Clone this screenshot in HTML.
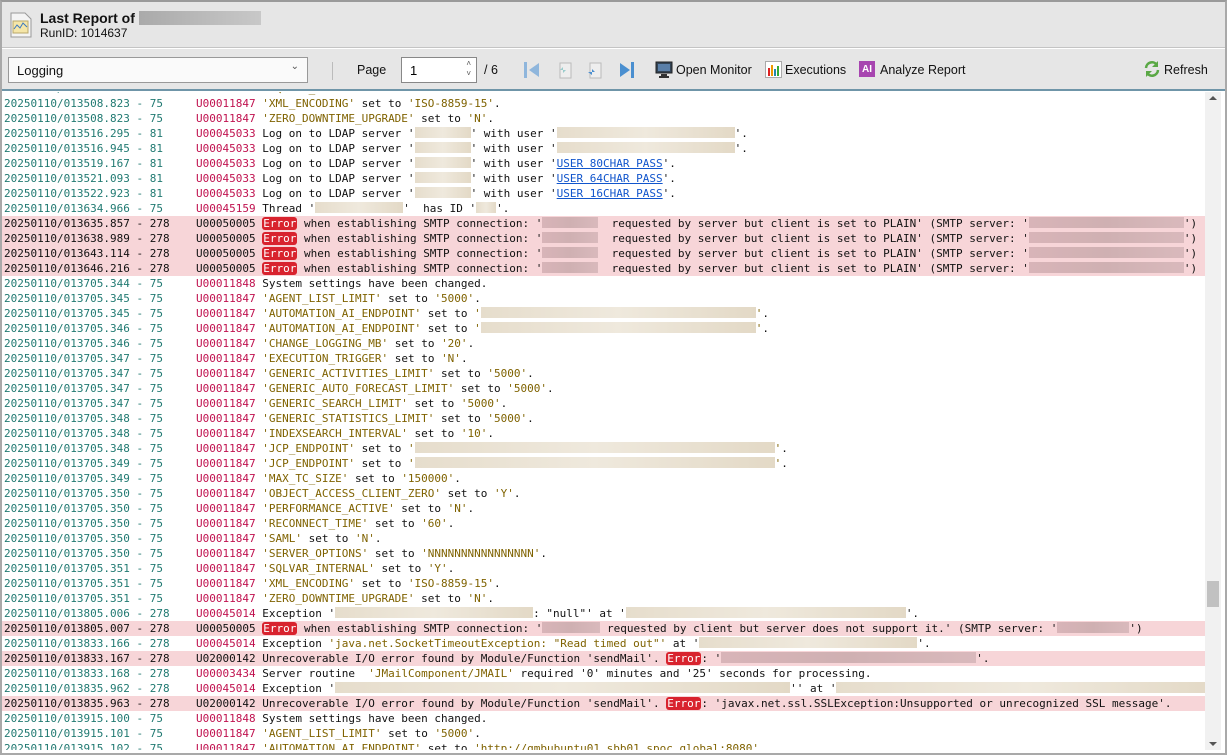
<!DOCTYPE html>
<html><head><meta charset="utf-8"><style>
*{margin:0;padding:0;box-sizing:border-box}
body{width:1227px;height:755px;overflow:hidden;background:#fff;font-family:"Liberation Sans",Arial,sans-serif;position:relative}
.frame{position:absolute;left:0;top:0;width:1227px;height:755px;border:2px solid #a9a9a9;border-top:2px solid #9a9a9a}
.hdr{position:absolute;left:2px;top:2px;width:1223px;height:46px;background:#e6e6e6;border-bottom:1px solid #c4c4c4}
.title{position:absolute;left:38px;top:8px;font-size:14px;font-weight:bold;color:#111}
.runid{position:absolute;left:38px;top:24px;font-size:12px;color:#111}
.tb{position:absolute;left:2px;top:49px;width:1223px;height:42px;background:#e6e6e6;border-bottom:2px solid #6f95a8}
.sel{position:absolute;left:6px;top:8px;width:300px;height:26px;background:#fafafa;border:1px solid #999;font-size:13px;padding:5px 8px;color:#111}
.lbl{position:absolute;font-size:12.5px;color:#111}
.inp{position:absolute;left:399px;top:8px;width:76px;height:26px;background:#fff;border:1px solid #888;font-size:13px;padding:5px 8px}
.log{position:absolute;left:2px;top:92px;width:1203px;height:658px;overflow:hidden}
.in{position:absolute;left:0;top:-11px;width:1203px}
.r{height:15px;line-height:15px;font-family:"DejaVu Sans Mono","Liberation Mono",monospace;font-size:11px;white-space:pre;padding-left:2px;color:#111}
.t{display:inline-block;width:192px;color:#217a72}
.c{color:#c0124f}
.s{color:#7f6200}
.e{background:#f7d5d8}
.e .t,.e .c{color:#111}
.b{display:inline-block;height:11px;vertical-align:-1px;background:linear-gradient(90deg,#e6ddcc,#efe9dd,#e3d9c6)}
.e .b{background:linear-gradient(90deg,#d8b4b8,#cfb0b2,#d9b9bc)}
.err{background:#d8232e;color:#fff;border-radius:3px;padding:0 1px}
a{color:#1155cc;text-decoration:underline}
.sb{position:absolute;left:1205px;top:92px;width:16px;height:658px;background:#f1f1f1}
.th{position:absolute;left:1207px;top:581px;width:12px;height:26px;background:#c1c1c1}
</style></head><body>
<div class="hdr">
<svg style="position:absolute;left:8px;top:10px" width="22" height="26" viewBox="0 0 22 26"><path d="M1 1h14l6 6v18H1z" fill="#f4f4f4" stroke="#999"/><rect x="3" y="9" width="15" height="12" fill="#f5e6a8" stroke="#b9a76a"/><path d="M4 17l3-4 3 3 3-5 4 4" stroke="#3a78c0" fill="none"/></svg>
<div class="title">Last Report of <span style="display:inline-block;width:122px;height:14px;vertical-align:-2px;background:linear-gradient(90deg,#aaa,#c8c8c8)"></span></div>
<div class="runid">RunID: 1014637</div>
</div>
<div class="tb">
<div class="sel">Logging<span style="position:absolute;right:8px;top:3px;font-size:10px;color:#555">&#8964;</span></div>
<div style="position:absolute;left:330px;top:13px;width:1px;height:18px;background:#bbb"></div>
<div class="lbl" style="left:355px;top:14px">Page</div>
<div class="inp">1<span style="position:absolute;right:5px;top:1px;font-size:8px;color:#555;line-height:10px">&#708;<br>&#709;</span></div>
<div class="lbl" style="left:482px;top:14px">/ 6</div>
<svg style="position:absolute;left:520px;top:11px" width="116" height="20"><rect x="2" y="2" width="3" height="16" fill="#8fb6dc"/><path d="M17 3v14l-10-7z" fill="#8fb6dc"/><rect x="38" y="3" width="11" height="15" fill="#eee" stroke="#bbb"/><path d="M44 10h-6l3-3v6z" fill="#9cc"/><rect x="68" y="3" width="11" height="15" fill="#eee" stroke="#bbb"/><path d="M66 12h7l-3-3v6z" fill="#4a8fd0"/><path d="M98 3v14l10-7z" fill="#4a8fd0"/><rect x="109" y="2" width="3" height="16" fill="#4a8fd0"/></svg>
<svg style="position:absolute;left:653px;top:12px" width="18" height="18"><rect x="1" y="1" width="16" height="11" fill="#345" stroke="#222"/><rect x="3" y="3" width="12" height="7" fill="#5a7fa8"/><rect x="6" y="13" width="6" height="2" fill="#333"/><rect x="4" y="15" width="10" height="2" fill="#333"/></svg>
<div class="lbl" style="left:674px;top:14px">Open Monitor</div>
<svg style="position:absolute;left:763px;top:12px" width="17" height="17"><rect x=".5" y=".5" width="16" height="16" fill="#fff" stroke="#aaa"/><rect x="3" y="7" width="2" height="8" fill="#d22"/><rect x="6" y="4" width="2" height="11" fill="#e90"/><rect x="9" y="8" width="2" height="7" fill="#28a"/><rect x="12" y="5" width="2" height="10" fill="#3a3"/></svg>
<div class="lbl" style="left:783px;top:14px">Executions</div>
<div style="position:absolute;left:857px;top:12px;width:16px;height:16px;background:#a745b0;color:#fff;font-size:10px;font-weight:bold;line-height:17px;text-align:center">AI</div>
<div class="lbl" style="left:878px;top:14px">Analyze Report</div>
<svg style="position:absolute;left:1141px;top:11px" width="18" height="18"><path d="M3 8a6 6 0 0 1 11-3" stroke="#5aa845" stroke-width="2.5" fill="none"/><path d="M15 1v6h-6z" fill="#5aa845"/><path d="M15 10a6 6 0 0 1-11 3" stroke="#5aa845" stroke-width="2.5" fill="none"/><path d="M3 17v-6h6z" fill="#5aa845"/></svg>
<div class="lbl" style="left:1162px;top:14px">Refresh</div>
</div>
<div class="log"><div class="in">
<div class="r"><span class="t">20250110/013508.823 - 75</span><span class="c">U00011847</span> <span class="s">'SQLVAR_INTERNAL'</span> set to <span class="s">'Y'</span>.</div>
<div class="r"><span class="t">20250110/013508.823 - 75</span><span class="c">U00011847</span> <span class="s">'XML_ENCODING'</span> set to <span class="s">'ISO-8859-15'</span>.</div>
<div class="r"><span class="t">20250110/013508.823 - 75</span><span class="c">U00011847</span> <span class="s">'ZERO_DOWNTIME_UPGRADE'</span> set to <span class="s">'N'</span>.</div>
<div class="r"><span class="t">20250110/013516.295 - 81</span><span class="c">U00045033</span> Log on to LDAP server '<span class="b" style="width:56px"></span>' with user '<span class="b" style="width:178px"></span>'.</div>
<div class="r"><span class="t">20250110/013516.945 - 81</span><span class="c">U00045033</span> Log on to LDAP server '<span class="b" style="width:56px"></span>' with user '<span class="b" style="width:178px"></span>'.</div>
<div class="r"><span class="t">20250110/013519.167 - 81</span><span class="c">U00045033</span> Log on to LDAP server '<span class="b" style="width:56px"></span>' with user '<a>USER 80CHAR PASS</a>'.</div>
<div class="r"><span class="t">20250110/013521.093 - 81</span><span class="c">U00045033</span> Log on to LDAP server '<span class="b" style="width:56px"></span>' with user '<a>USER 64CHAR PASS</a>'.</div>
<div class="r"><span class="t">20250110/013522.923 - 81</span><span class="c">U00045033</span> Log on to LDAP server '<span class="b" style="width:56px"></span>' with user '<a>USER 16CHAR PASS</a>'.</div>
<div class="r"><span class="t">20250110/013634.966 - 75</span><span class="c">U00045159</span> Thread '<span class="b" style="width:88px"></span>'  has ID '<span class="b" style="width:20px"></span>'.</div>
<div class="r e"><span class="t">20250110/013635.857 - 278</span><span class="c">U00050005</span> <span class="err">Error</span> when establishing SMTP connection: '<span class="b" style="width:56px"></span>  requested by server but client is set to PLAIN' (SMTP server: '<span class="b" style="width:155px"></span>')</div>
<div class="r e"><span class="t">20250110/013638.989 - 278</span><span class="c">U00050005</span> <span class="err">Error</span> when establishing SMTP connection: '<span class="b" style="width:56px"></span>  requested by server but client is set to PLAIN' (SMTP server: '<span class="b" style="width:155px"></span>')</div>
<div class="r e"><span class="t">20250110/013643.114 - 278</span><span class="c">U00050005</span> <span class="err">Error</span> when establishing SMTP connection: '<span class="b" style="width:56px"></span>  requested by server but client is set to PLAIN' (SMTP server: '<span class="b" style="width:155px"></span>')</div>
<div class="r e"><span class="t">20250110/013646.216 - 278</span><span class="c">U00050005</span> <span class="err">Error</span> when establishing SMTP connection: '<span class="b" style="width:56px"></span>  requested by server but client is set to PLAIN' (SMTP server: '<span class="b" style="width:155px"></span>')</div>
<div class="r"><span class="t">20250110/013705.344 - 75</span><span class="c">U00011848</span> System settings have been changed.</div>
<div class="r"><span class="t">20250110/013705.345 - 75</span><span class="c">U00011847</span> <span class="s">'AGENT_LIST_LIMIT'</span> set to <span class="s">'5000'</span>.</div>
<div class="r"><span class="t">20250110/013705.345 - 75</span><span class="c">U00011847</span> <span class="s">'AUTOMATION_AI_ENDPOINT'</span> set to <span class="s">'</span><span class="b" style="width:275px"></span><span class="s">'</span>.</div>
<div class="r"><span class="t">20250110/013705.346 - 75</span><span class="c">U00011847</span> <span class="s">'AUTOMATION_AI_ENDPOINT'</span> set to <span class="s">'</span><span class="b" style="width:275px"></span><span class="s">'</span>.</div>
<div class="r"><span class="t">20250110/013705.346 - 75</span><span class="c">U00011847</span> <span class="s">'CHANGE_LOGGING_MB'</span> set to <span class="s">'20'</span>.</div>
<div class="r"><span class="t">20250110/013705.347 - 75</span><span class="c">U00011847</span> <span class="s">'EXECUTION_TRIGGER'</span> set to <span class="s">'N'</span>.</div>
<div class="r"><span class="t">20250110/013705.347 - 75</span><span class="c">U00011847</span> <span class="s">'GENERIC_ACTIVITIES_LIMIT'</span> set to <span class="s">'5000'</span>.</div>
<div class="r"><span class="t">20250110/013705.347 - 75</span><span class="c">U00011847</span> <span class="s">'GENERIC_AUTO_FORECAST_LIMIT'</span> set to <span class="s">'5000'</span>.</div>
<div class="r"><span class="t">20250110/013705.347 - 75</span><span class="c">U00011847</span> <span class="s">'GENERIC_SEARCH_LIMIT'</span> set to <span class="s">'5000'</span>.</div>
<div class="r"><span class="t">20250110/013705.348 - 75</span><span class="c">U00011847</span> <span class="s">'GENERIC_STATISTICS_LIMIT'</span> set to <span class="s">'5000'</span>.</div>
<div class="r"><span class="t">20250110/013705.348 - 75</span><span class="c">U00011847</span> <span class="s">'INDEXSEARCH_INTERVAL'</span> set to <span class="s">'10'</span>.</div>
<div class="r"><span class="t">20250110/013705.348 - 75</span><span class="c">U00011847</span> <span class="s">'JCP_ENDPOINT'</span> set to <span class="s">'</span><span class="b" style="width:360px"></span><span class="s">'</span>.</div>
<div class="r"><span class="t">20250110/013705.349 - 75</span><span class="c">U00011847</span> <span class="s">'JCP_ENDPOINT'</span> set to <span class="s">'</span><span class="b" style="width:360px"></span><span class="s">'</span>.</div>
<div class="r"><span class="t">20250110/013705.349 - 75</span><span class="c">U00011847</span> <span class="s">'MAX_TC_SIZE'</span> set to <span class="s">'150000'</span>.</div>
<div class="r"><span class="t">20250110/013705.350 - 75</span><span class="c">U00011847</span> <span class="s">'OBJECT_ACCESS_CLIENT_ZERO'</span> set to <span class="s">'Y'</span>.</div>
<div class="r"><span class="t">20250110/013705.350 - 75</span><span class="c">U00011847</span> <span class="s">'PERFORMANCE_ACTIVE'</span> set to <span class="s">'N'</span>.</div>
<div class="r"><span class="t">20250110/013705.350 - 75</span><span class="c">U00011847</span> <span class="s">'RECONNECT_TIME'</span> set to <span class="s">'60'</span>.</div>
<div class="r"><span class="t">20250110/013705.350 - 75</span><span class="c">U00011847</span> <span class="s">'SAML'</span> set to <span class="s">'N'</span>.</div>
<div class="r"><span class="t">20250110/013705.350 - 75</span><span class="c">U00011847</span> <span class="s">'SERVER_OPTIONS'</span> set to <span class="s">'NNNNNNNNNNNNNNNN'</span>.</div>
<div class="r"><span class="t">20250110/013705.351 - 75</span><span class="c">U00011847</span> <span class="s">'SQLVAR_INTERNAL'</span> set to <span class="s">'Y'</span>.</div>
<div class="r"><span class="t">20250110/013705.351 - 75</span><span class="c">U00011847</span> <span class="s">'XML_ENCODING'</span> set to <span class="s">'ISO-8859-15'</span>.</div>
<div class="r"><span class="t">20250110/013705.351 - 75</span><span class="c">U00011847</span> <span class="s">'ZERO_DOWNTIME_UPGRADE'</span> set to <span class="s">'N'</span>.</div>
<div class="r"><span class="t">20250110/013805.006 - 278</span><span class="c">U00045014</span> Exception '<span class="b" style="width:198px"></span>: "null"' at '<span class="b" style="width:280px"></span>'.</div>
<div class="r e"><span class="t">20250110/013805.007 - 278</span><span class="c">U00050005</span> <span class="err">Error</span> when establishing SMTP connection: '<span class="b" style="width:58px"></span> requested by client but server does not support it.' (SMTP server: '<span class="b" style="width:72px"></span>')</div>
<div class="r"><span class="t">20250110/013833.166 - 278</span><span class="c">U00045014</span> Exception <span class="s">'java.net.SocketTimeoutException: "Read timed out"'</span> at '<span class="b" style="width:218px"></span>'.</div>
<div class="r e"><span class="t">20250110/013833.167 - 278</span><span class="c">U02000142</span> Unrecoverable I/O error found by Module/Function 'sendMail'. <span class="err">Error</span>: '<span class="b" style="width:255px"></span>'.</div>
<div class="r"><span class="t">20250110/013833.168 - 278</span><span class="c">U00003434</span> Server routine  <span class="s">'JMailComponent/JMAIL'</span> required '0' minutes and '25' seconds for processing.</div>
<div class="r"><span class="t">20250110/013835.962 - 278</span><span class="c">U00045014</span> Exception '<span class="b" style="width:455px"></span>'' at '<span class="b" style="width:380px"></span></div>
<div class="r e"><span class="t">20250110/013835.963 - 278</span><span class="c">U02000142</span> Unrecoverable I/O error found by Module/Function 'sendMail'. <span class="err">Error</span>: 'javax.net.ssl.SSLException:Unsupported or unrecognized SSL message'.</div>
<div class="r"><span class="t">20250110/013915.100 - 75</span><span class="c">U00011848</span> System settings have been changed.</div>
<div class="r"><span class="t">20250110/013915.101 - 75</span><span class="c">U00011847</span> <span class="s">'AGENT_LIST_LIMIT'</span> set to <span class="s">'5000'</span>.</div>
<div class="r"><span class="t">20250110/013915.102 - 75</span><span class="c">U00011847</span> <span class="s">'AUTOMATION_AI_ENDPOINT'</span> set to <span class="s">'http://gmbubuntu01.sbb01.spoc.global:8080'</span>.</div>
</div></div>
<div class="sb"><div style="position:absolute;left:4px;top:4px;border-left:4px solid transparent;border-right:4px solid transparent;border-bottom:4px solid #555"></div><div style="position:absolute;left:4px;bottom:4px;border-left:4px solid transparent;border-right:4px solid transparent;border-top:4px solid #555"></div></div>
<div class="th"></div>
<div class="frame"></div>
</body></html>
